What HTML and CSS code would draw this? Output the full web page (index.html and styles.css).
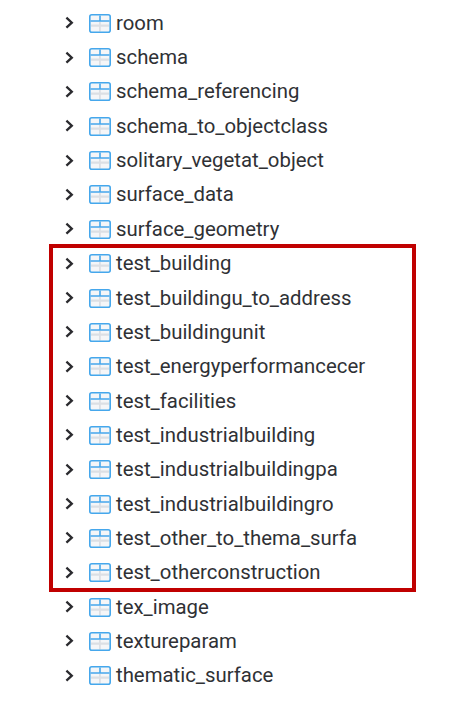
FILE: index.html
```html
<!DOCTYPE html>
<html lang="en">
<head>
<meta charset="utf-8">
<title>Tables</title>
<link rel="stylesheet" href="styles.css">
</head>
<body>
<svg width="0" height="0" class="defs">
  <symbol id="chevron" viewBox="0 0 9 13"><path d="M1.4 1.7 6.8 6.7 1.4 11.7" fill="none" stroke="#2b2b2f" stroke-width="2.3"/></symbol>
  <symbol id="table" viewBox="0 0 22 19">
    <rect x=".8" y=".8" width="20.4" height="17.4" rx="2" fill="#f5f6f8"/>
    <path d="M2 10.6h18v2.2H2zM10 8h1.8v9.5H10z" fill="#dcdfe4"/>
    <path d="M1.5 7h19M11 1.5v5.5" stroke="#45a7ec" stroke-width="1.6"/>
    <rect x=".8" y=".8" width="20.4" height="17.4" rx="2" fill="none" stroke="#45a7ec" stroke-width="1.6"/>
  </symbol>
</svg>
<ul class="tree" id="tree"></ul>
<div class="highlight"></div>
<script src="tree.js"></script>
</body>
</html>
```
FILE: styles.css
```css
body {
  margin: 0;
  background: #fff;
  font-family: Roboto, sans-serif;
  color: #2f3135;
  overflow: hidden;
}
.defs {
  position: absolute;
}
.tree {
  list-style: none;
  margin: 0;
  padding: 5.6px 0 0 65px;
}
.row {
  display: flex;
  align-items: center;
  height: 34.35px;
  font-size: 20.35px;
  white-space: nowrap;
}
.chevron {
  width: 9px;
  height: 13px;
  margin-right: 15px;
}
.icon {
  width: 22px;
  height: 19px;
  margin: 1px 5px 0 0;
}
.highlight {
  position: absolute;
  left: 49px;
  top: 244px;
  width: 367px;
  height: 348px;
  box-sizing: border-box;
  border: 4px solid #c00000;
}
```
FILE: tree.js
```js
const tables = [
  'room', 'schema', 'schema_referencing', 'schema_to_objectclass',
  'solitary_vegetat_object', 'surface_data', 'surface_geometry',
  'test_building', 'test_buildingu_to_address', 'test_buildingunit',
  'test_energyperformancecer', 'test_facilities', 'test_industrialbuilding',
  'test_industrialbuildingpa', 'test_industrialbuildingro',
  'test_other_to_thema_surfa', 'test_otherconstruction', 'tex_image',
  'textureparam', 'thematic_surface'
];
document.getElementById('tree').innerHTML = tables.map(name =>
  `<li class="row"><svg class="chevron"><use href="#chevron"/></svg><svg class="icon"><use href="#table"/></svg><span>${name}</span></li>`
).join('');
```
